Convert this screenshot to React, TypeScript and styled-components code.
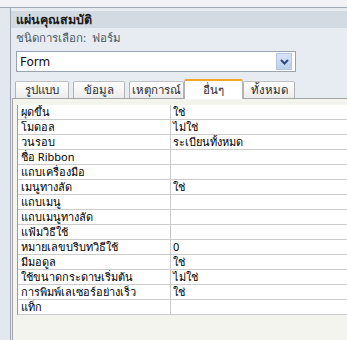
import React from "react"
import styled, { createGlobalStyle } from "styled-components"

const GlobalStyle = createGlobalStyle`
  html, body {
    margin: 0;
    padding: 0;
    width: 347px;
    height: 340px;
    overflow: hidden;
    background: #e9edf3;
    font-family: "Noto Sans", "DejaVu Sans", sans-serif;
  }
`

const rowHeight = 15

const Frame = styled.div`
  width: 347px;
  height: 340px;
  display: flex;
  flex-direction: column;
`

const TopStrip = styled.div`
  height: 7px;
  background: #f1f1f6;
  border-bottom: 1px solid #a3a9b3;
  flex-shrink: 0;
`

const Body = styled.div`
  flex: 1;
  display: flex;
  min-height: 0;
`

const SideStrip = styled.div`
  width: 10px;
  background: #e3e8ef;
  border-right: 1px solid #9ea6b1;
  flex-shrink: 0;
`

const Sheet = styled.div`
  flex: 1;
  display: flex;
  flex-direction: column;
  background: #e7ecf2;
  padding-top: 3px;
  min-width: 0;
`

const TitleBar = styled.div`
  height: 17px;
  background: #d3dae2;
  padding-left: 5px;
  font-size: 12.5px;
  font-weight: bold;
  line-height: 17px;
  color: #1a1a1a;
`

const SelectionLabel = styled.div`
  padding: 3px 0 0 5px;
  height: 20px;
  font-size: 11.5px;
  line-height: 14px;
  color: #4c5663;
`

const Combo = styled.div`
  margin-left: 5px;
  width: 280px;
  height: 21px;
  box-sizing: border-box;
  background: #ffffff;
  border: 1px solid #98a3b3;
  display: flex;
  align-items: center;
  justify-content: space-between;
  padding: 0 3px 0 3px;
  font-family: "DejaVu Sans", sans-serif;
  font-size: 12px;
  color: #111;
`

const DropButton = styled.div`
  width: 14px;
  height: 15px;
  background: linear-gradient(#d9e4f5, #bccfec);
  border: 1px solid #b5c6e2;
  display: flex;
  align-items: center;
  justify-content: center;
`

const TabRow = styled.div`
  display: flex;
  align-items: flex-end;
  height: 22px;
  padding-left: 4px;
  margin-top: 4px;
`

const Tab = styled.div<{ active?: boolean; width: number }>`
  width: ${(p) => p.width}px;
  height: ${(p) => (p.active ? 20 : 17)}px;
  box-sizing: border-box;
  margin-right: ${(p) => (p.active ? 0 : 4)}px;
  margin-left: ${(p) => (p.active ? -4 : 0)}px;
  border: 1px solid #b3b3b3;
  border-bottom: none;
  border-top: ${(p) => (p.active ? "2px solid #f2a531" : "1px solid #c2c2c2")};
  border-radius: 2px 2px 0 0;
  background: ${(p) => (p.active ? "#ffffff" : "linear-gradient(#ffffff, #ececec)")};
  font-size: 11.5px;
  color: #2a2a2a;
  display: flex;
  align-items: center;
  justify-content: center;
  white-space: nowrap;
  overflow: hidden;
  position: relative;
  z-index: ${(p) => (p.active ? 1 : 0)};
  margin-bottom: ${(p) => (p.active ? -1 : 0)}px;
`

const GridPanel = styled.div`
  flex: 1;
  margin-left: 1px;
  background: #f4f4ef;
  border-top: 1px solid #a6a6a6;
  border-left: 1px solid #a6a6a6;
  padding: 6px 0 0 4px;
`

const Grid = styled.div`
  background: #ffffff;
  border-left: 1px solid #9b9b9b;
  display: grid;
  grid-template-columns: 153px 1fr;
`

const Cell = styled.div<{ label?: boolean }>`
  height: ${rowHeight}px;
  box-sizing: border-box;
  border-bottom: 1px solid #cbcbcb;
  border-right: ${(p) => (p.label ? "1px solid #cbcbcb" : "none")};
  padding-left: ${(p) => (p.label ? 3 : 2)}px;
  font-size: 11px;
  line-height: 14px;
  color: #000;
  white-space: nowrap;
  overflow: hidden;
`

const tabs = [
  { label: "รูปแบบ", width: 54 },
  { label: "ข้อมูล", width: 52 },
  { label: "เหตุการณ์", width: 55 },
  { label: "อื่นๆ", width: 59, active: true },
  { label: "ทั้งหมด", width: 52 },
]

const properties: [string, string][] = [
  ["ผุดขึ้น", "ใช่"],
  ["โมดอล", "ไม่ใช่"],
  ["วนรอบ", "ระเบียนทั้งหมด"],
  ["ชื่อ Ribbon", ""],
  ["แถบเครื่องมือ", ""],
  ["เมนูทางลัด", "ใช่"],
  ["แถบเมนู", ""],
  ["แถบเมนูทางลัด", ""],
  ["แฟ้มวิธีใช้", ""],
  ["หมายเลขบริบทวิธีใช้", "0"],
  ["มีมอดูล", "ใช่"],
  ["ใช้ขนาดกระดาษเริ่มต้น", "ไม่ใช่"],
  ["การพิมพ์เลเซอร์อย่างเร็ว", "ใช่"],
  ["แท็ก", ""],
]

const Chevron = () => (
  <svg width="9" height="6" viewBox="0 0 9 6">
    <path d="M1 1 L4.5 4.5 L8 1" fill="none" stroke="#2a4a86" strokeWidth="2" />
  </svg>
)

export default function App() {
  return (
    <Frame>
      <GlobalStyle />
      <TopStrip />
      <Body>
        <SideStrip />
        <Sheet>
          <TitleBar>แผ่นคุณสมบัติ</TitleBar>
          <SelectionLabel>ชนิดการเลือก:&nbsp;&nbsp;ฟอร์ม</SelectionLabel>
          <Combo>
            <span>Form</span>
            <DropButton>
              <Chevron />
            </DropButton>
          </Combo>
          <TabRow>
            {tabs.map((t) => (
              <Tab key={t.label} width={t.width} active={t.active}>
                {t.label}
              </Tab>
            ))}
          </TabRow>
          <GridPanel>
            <Grid>
              {properties.map(([name, value]) => (
                <React.Fragment key={name}>
                  <Cell label>{name}</Cell>
                  <Cell>{value}</Cell>
                </React.Fragment>
              ))}
            </Grid>
          </GridPanel>
        </Sheet>
      </Body>
    </Frame>
  )
}
